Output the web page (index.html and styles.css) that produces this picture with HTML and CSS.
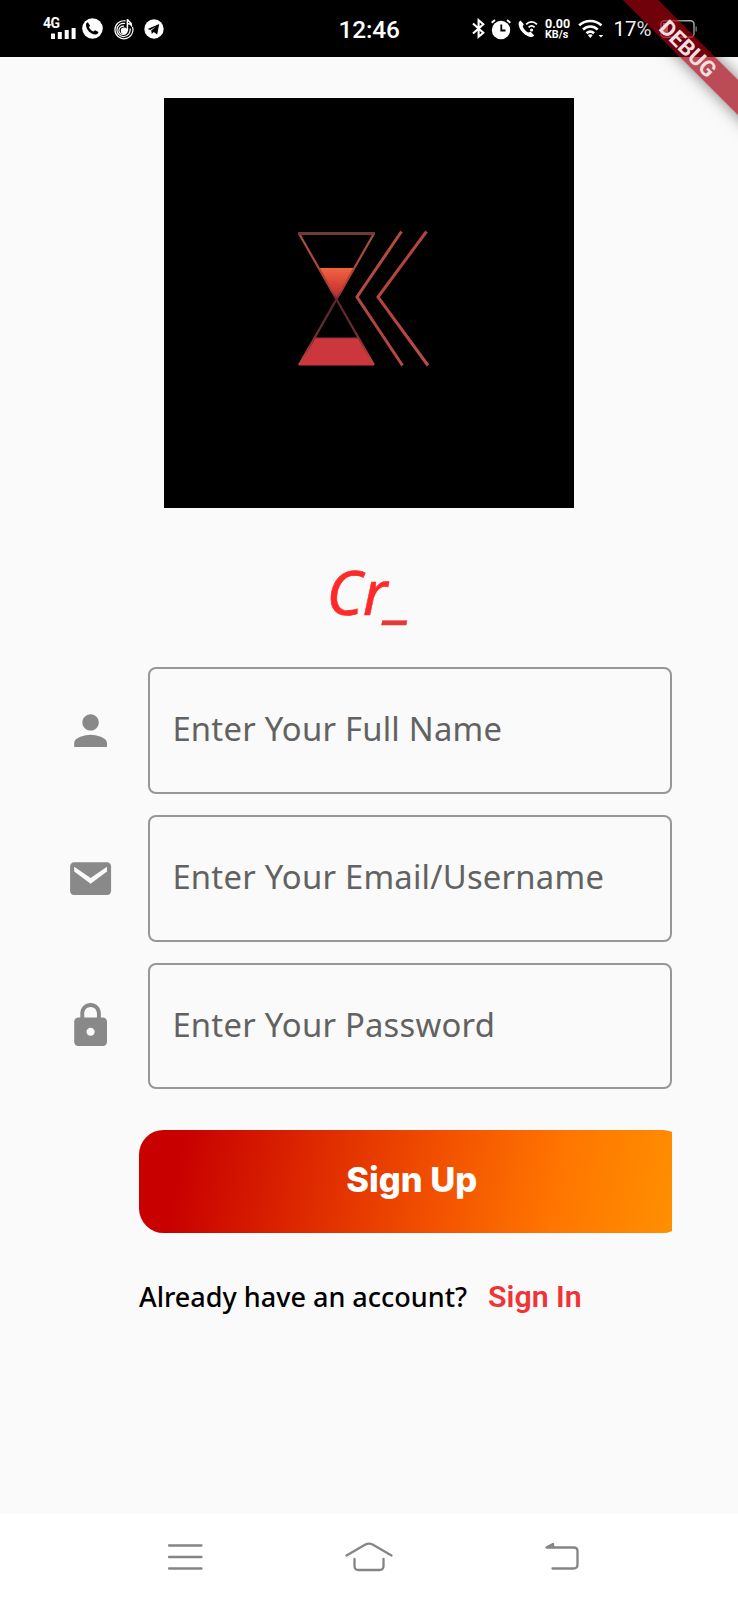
FILE: index.html
```html
<!DOCTYPE html>
<html lang="en">
<head>
<meta charset="utf-8">
<title>Sign Up</title>
<link rel="stylesheet" href="styles.css">
</head>
<body>
<div class="screen">
  <header class="status">
    <div class="status-left">
      <div class="signal">
        <span class="network">4G</span>
        <svg class="bars" width="25" height="12" viewBox="0 0 25 12" fill="#fff"><path d="M0 5.500h4V11H0zM6.800 4h4v7h-4zM13.700 2h4v9h-4zM20.600 0h4v11h-4z"/></svg>
      </div>
      <svg width="21" height="21" viewBox="0 0 21 21"><circle cx="10.500" cy="10.500" r="10.300" fill="#fff"/><path d="M5.800 4.300 8 7.600 7 9.300c1 2.100 2.300 3.400 4.300 4.200l1.900-1.200 3.200 1.800c-.3 1.900-1.600 2.700-3.200 2.400C8.200 15.800 4.500 12 4 7.200c-.1-1.400.5-2.400 1.800-2.900z" fill="#000"/></svg>
      <svg class="music" width="21" height="22" viewBox="0 0 21 22" fill="none" stroke="#fff" stroke-width="1.200"><path d="M12.500 2.900A9 9 0 1 0 19.500 9M12 5.500a6.600 6.600 0 1 0 5 5M11 8.200a4.200 4.200 0 1 0 3.300 3.700"/><circle cx="11" cy="12.800" r="2.600" fill="#fff"/><path d="M14.400 12.500V1.200c.8 2.800 4.400 2.300 4.100 6.200-1-1.700-2.300-2-4.100-2" stroke-width="1.500"/></svg>
      <svg class="plane" width="20" height="20" viewBox="0 0 20 20"><circle cx="10" cy="10" r="9.700" fill="#fff"/><path d="m3.700 10 11.500-5-2 10.500-3.500-2.400-1.900 2-.6-3.700 5.200-4.200-6.200 3.800z" fill="#000"/></svg>
    </div>
    <time class="clock">12:46</time>
    <div class="status-right">
      <svg width="13" height="21" viewBox="0 0 13 21" fill="none" stroke="#fff" stroke-width="2.100"><path d="m1 5.500 10.300 9.200-4.700 4V2.200l4.700 4L1 15.500"/></svg>
      <svg class="alarm" width="22" height="22" viewBox="0 0 22 22"><circle cx="11" cy="12" r="9.200" fill="#fff"/><path d="M1.700 4.800 5 2M17 2l3.300 2.800" stroke="#fff" stroke-width="2"/><path d="M11.300 6.500v6h4.200" fill="none" stroke="#000" stroke-width="1.800"/></svg>
      <svg class="call" width="20" height="20" viewBox="0 0 20 20"><path d="M2.500 1.500 5.800 5.200 4.700 7.600c1.300 2.800 3 4.700 5.600 6l2.400-.8 3.500 3.600c-1.500 1.600-3.700 2-6.100.9C5.200 15 1.100 10.200.6 5.200c-.1-1.700.6-2.900 1.900-3.700z" fill="#fff"/><path d="M8.200 5.300c3-3.200 7.600-3.200 10.700 0M10.600 8.300c1.900-1.800 4.300-1.800 6 0" fill="none" stroke="#fff" stroke-width="1.700"/><circle cx="13.600" cy="11" r="1.600" fill="#fff"/></svg>
      <div class="speed"><span class="rate">0.00</span><span class="unit">KB/s</span></div>
      <svg class="wifi" width="26" height="20" viewBox="0 0 26 20"><g fill="none" stroke="#fff" stroke-width="2.700"><path d="M1.200 6.400c6-5.900 16.200-5.900 22.200 0M5 10.500c4.200-4 10.500-4 14.700 0M8.500 14.200c2.400-2.100 5.200-2.100 7.600 0"/></g><path d="m12.300 18.900-2.500-2.800c1.600-1 3.400-1 5 0zM20.600 16h4.600l-2.300 2.600z" fill="#fff"/></svg>
      <span class="percent">17%</span>
      <svg class="battery" width="38" height="20" viewBox="0 0 38 20"><rect x="1" y="1.800" width="33" height="16.500" rx="3.500" fill="none" stroke="#bbb" stroke-width="1.400"/><path d="M3 4h5v12.200H3z" fill="#fff"/><path d="M36.200 7.500v5" stroke="#777" stroke-width="1.500"/></svg>
    </div>
  </header>

  <main class="content">
    <div class="logo">
      <svg width="410" height="410" viewBox="0 0 410 410">
        <defs>
          <linearGradient id="sand" x1="0" y1="0" x2="0" y2="1"><stop offset="0" stop-color="#f2643f"/><stop offset="1" stop-color="#b8242e"/></linearGradient>
          <linearGradient id="glass" gradientUnits="userSpaceOnUse" x1="0" y1="133" x2="0" y2="266"><stop offset="0" stop-color="#a95240"/><stop offset=".45" stop-color="#b23d34"/><stop offset=".52" stop-color="#60252e"/><stop offset=".75" stop-color="#6d2c36"/><stop offset="1" stop-color="#c34141"/></linearGradient>
          <linearGradient id="chevron" x1="0" y1="0" x2="1" y2="1"><stop offset="0" stop-color="#b65342"/><stop offset=".5" stop-color="#b5423f"/><stop offset="1" stop-color="#bd4c45"/></linearGradient>
        </defs>
        <path d="M155.500 170h34.500L173 202z" fill="url(#sand)"/>
        <path d="M151.500 240h43l15.500 27.500h-75z" fill="#cc373d"/>
        <path d="M135 135.500 210 267M210 135.500 135 267" fill="none" stroke="url(#glass)" stroke-width="2.200"/>
        <path d="M134 135.500h77" stroke="#713b31" stroke-width="3.200"/>
        <path d="M151 240h44" stroke="#9d2c34" stroke-width="1"/>
        <path d="M237.500 133.500 193 199l45.500 68.500M262.500 133.500 214 199l50 68.500" fill="none" stroke="url(#chevron)" stroke-width="3"/>
      </svg>
    </div>
    <h1 class="headline">Cr<span class="cursor">_</span></h1>
    <form class="form">
      <label class="row">
        <svg class="row-icon" viewBox="0 0 24 24"><path d="M12 12c2.210 0 4-1.790 4-4s-1.790-4-4-4-4 1.790-4 4 1.790 4 4 4zm0 2c-2.670 0-8 1.340-8 4v2h16v-2c0-2.660-5.330-4-8-4z"/></svg>
        <span class="field">Enter Your Full Name</span>
      </label>
      <label class="row">
        <svg class="row-icon" viewBox="0 0 24 24"><path d="M20 4H4c-1.100 0-1.990.9-1.990 2L2 18c0 1.100.9 2 2 2h16c1.100 0 2-.9 2-2V6c0-1.100-.9-2-2-2zm0 4.500-8 6-8-6V6.200l8 5.500 8-5.500v2z"/></svg>
        <span class="field">Enter Your Email/Username</span>
      </label>
      <label class="row">
        <svg class="row-icon" viewBox="0 0 24 24"><path d="M18 8h-1V6c0-2.760-2.240-5-5-5S7 3.240 7 6v2H6c-1.100 0-2 .9-2 2v10c0 1.100.9 2 2 2h12c1.100 0 2-.9 2-2V10c0-1.100-.9-2-2-2zm-6 9c-1.100 0-2-.9-2-2s.9-2 2-2 2 .9 2 2-.9 2-2 2zm3.100-9H8.900V6c0-1.710 1.390-3.100 3.100-3.100s3.100 1.390 3.100 3.100v2z"/></svg>
        <span class="field">Enter Your Password</span>
      </label>
      <div class="button-clip"><button class="signup" type="button">Sign Up</button></div>
      <p class="signin"><span class="question">Already have an account?</span><a class="signin-link">Sign In</a></p>
    </form>
  </main>

  <nav class="navbar">
    <svg width="36" height="32" viewBox="0 0 36 32"><path d="M2 4.500h32.500M2 16h32.500M2 27.500h32.500"/></svg>
    <svg class="home" width="50" height="32" viewBox="0 0 50 32"><path d="M2.500 14.500 21 3.800q4-2.300 8 0l18.500 10.700M10.500 18v7q0 4 4 4h21q4 0 4-4v-7"/></svg>
    <svg width="38" height="32" viewBox="0 0 38 32"><path d="M9.500 27.500h21q4 0 4-4V10q0-3.500-4-3.500H3.500L10 3v3"/></svg>
  </nav>
  <div class="ribbon-area"><div class="ribbon">DEBUG</div></div>
</div>
</body>
</html>
```
FILE: styles.css
```css
* { box-sizing: border-box; }
body { margin: 0; }
svg { display: block; flex: none; }

.screen {
  position: relative;
  display: flex;
  flex-direction: column;
  width: 738px;
  height: 1600px;
  overflow: hidden;
  background: #fafafa;
  font-family: "Noto Sans", sans-serif;
}

.status {
  display: grid;
  grid-template-columns: 338.500px 133.500px 1fr;
  align-items: center;
  height: 57.400px;
  background: #000;
  color: #fff;
  font-family: Roboto, sans-serif;
}
.status-left, .status-right { display: flex; align-items: center; }
.status-left { padding-left: 43px; }
.signal { width: 39px; height: 22px; }
.network { display: block; font-size: 14px; font-weight: 700; line-height: 11px; letter-spacing: -.5px; }
.bars { margin-left: 8px; margin-top: -1px; }
.music { margin-left: 10px; }
.plane { margin-left: 10px; }
.clock { font-size: 24.400px; font-weight: 500; line-height: 30px; letter-spacing: -.1px; padding-top: 2px; }
.alarm { margin-left: 5px; }
.call { margin-left: 6px; }
.speed { width: 26px; margin-left: 7px; font-weight: 700; white-space: nowrap; }
.rate, .unit { display: block; line-height: 11px; }
.rate { font-size: 12.500px; }
.unit { font-size: 10.800px; }
.wifi { margin-left: 7px; }
.percent { width: 46px; margin-left: 9.500px; padding-top: 1px; font-size: 20.500px; line-height: 24px; }

.content { flex: 1; display: flex; flex-direction: column; align-items: center; padding-top: 41px; }
.logo { width: 410px; height: 410px; background: #000; }
.headline {
  margin: 41px 0 0;
  height: 118px;
  color: #fd2a2a;
  font-size: 61.500px;
  font-style: italic;
  font-weight: 400;
  line-height: 84px;
  -webkit-text-stroke: .6px;
}
.cursor { color: #e53935; }

.form { width: 738px; padding: 0 66px; }
.row { display: flex; align-items: center; gap: 32.500px; height: 126.600px; margin-bottom: 21px; }
.row-icon { width: 49.200px; height: 49.200px; fill: #898989; }
.field {
  flex: 1;
  height: 126.600px;
  padding-left: 22.700px;
  border: 2px solid #979797;
  border-radius: 8px;
  color: #626262;
  font-size: 32.800px;
  line-height: 119px;
  letter-spacing: .23px;
  white-space: nowrap;
}

.button-clip { margin: 40.600px 0 0 73.300px; overflow: hidden; }
.signup {
  display: block;
  width: 548px;
  height: 103px;
  padding: 0 3px 3px 0;
  border: 0;
  border-radius: 24.600px;
  background: linear-gradient(100deg, #c80000 8%, #f25000 54%, #ff7600 76%, #ff9000 98%);
  color: #fff;
  font-family: Inter, sans-serif;
  font-size: 34.500px;
  font-weight: 800;
}

.signin { display: flex; align-items: baseline; gap: 21px; margin: 44px 0 0 73px; white-space: nowrap; line-height: 40px; }
.question { color: #000; font-size: 27px; font-weight: 500; }
.signin-link { color: #f03335; font-family: Roboto, sans-serif; font-size: 30.300px; font-weight: 600; }

.navbar { display: flex; align-items: flex-start; justify-content: space-between; height: 86.500px; padding: 27px 157px 0 166.500px; background: #fff; }
.navbar svg { fill: none; stroke: #858585; stroke-width: 2.300; stroke-linecap: round; stroke-linejoin: round; }
.navbar .home { margin-right: 7px; }

/* Corner banner laid diagonally over the status bar */
.ribbon-area { position: absolute; top: 0; right: 0; width: 180px; height: 180px; overflow: hidden; }
.ribbon {
  position: absolute;
  top: 36.600px;
  left: 29.900px;
  width: 204px;
  height: 25px;
  padding-right: 4px;
  transform: rotate(45deg);
  background: rgba(160, 0, 14, .7);
  box-shadow: 0 0 16px rgba(0, 0, 0, .5);
  color: #f3dfe1;
  font: 700 22px/27px Roboto, sans-serif;
  text-align: center;
}
```
